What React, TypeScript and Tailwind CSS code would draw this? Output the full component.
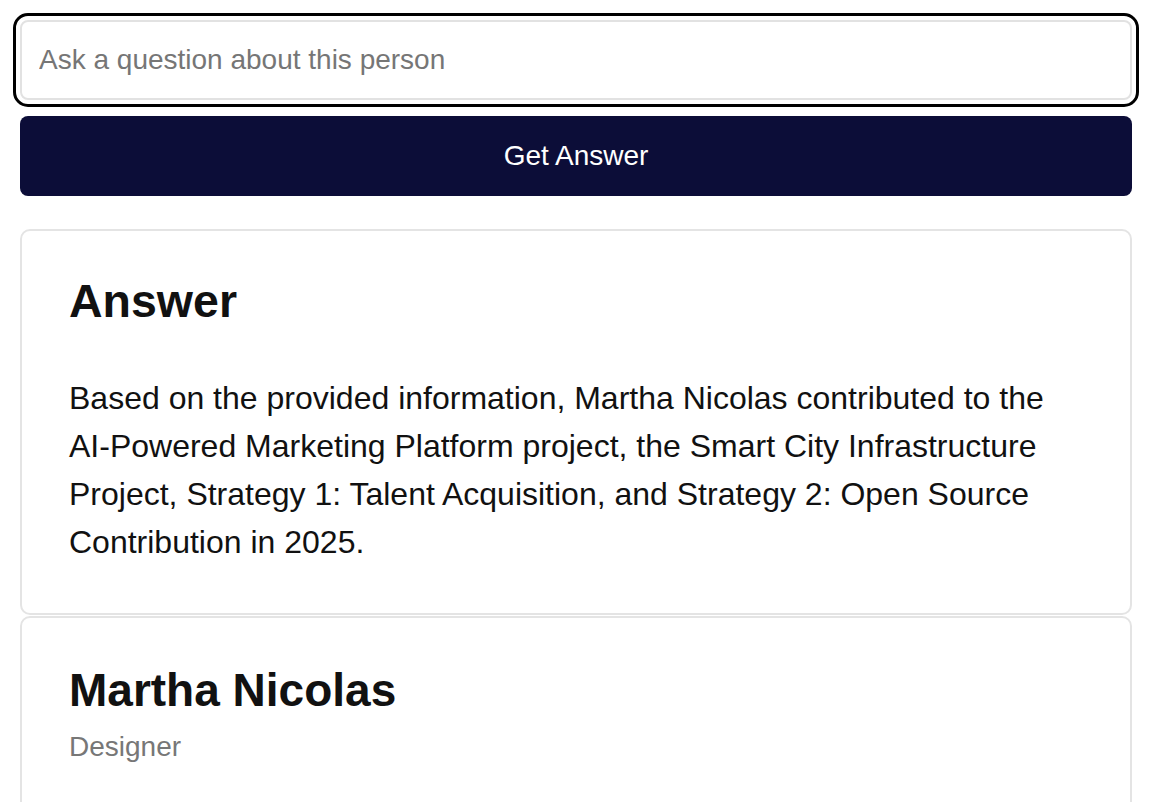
import { useState } from 'react';

const answerText =
  'Based on the provided information, Martha Nicolas contributed to the AI-Powered Marketing Platform project, the Smart City Infrastructure Project, Strategy 1: Talent Acquisition, and Strategy 2: Open Source Contribution in 2025.';

export default function App() {
  const [question, setQuestion] = useState('');

  return (
    <div className="min-h-screen bg-white pt-5 pr-6 pl-5 font-['Liberation_Sans',Arial,sans-serif] text-[#111]">
      {/* Question form */}
      <input
        value={question}
        onChange={(e) => setQuestion(e.target.value)}
        placeholder="Ask a question about this person"
        className="block h-[80px] w-full rounded-[8px] border-2 border-[#e2e2e2] bg-white px-[17px] text-[28px] text-[#111] outline-3 outline-solid outline-black outline-offset-4 placeholder:text-[#767676]"
      />
      <button className="mt-4 block h-[80px] w-full rounded-[8px] bg-[#0c0d38] text-[28px] text-white">
        Get Answer
      </button>

      {/* Answer card */}
      <div className="mt-[33px] rounded-[10px] border-2 border-[#e4e4e4] pt-[44px] pr-[47px] pb-[47px] pl-[47px]">
        <h2 className="text-[46.5px] leading-[52px] font-bold">Answer</h2>
        <p className="mt-[47px] text-[32px] leading-[48px]">{answerText}</p>
      </div>

      {/* Person card */}
      <div className="mt-[1px] rounded-[10px] border-2 border-[#e4e4e4] pt-[46px] pr-[47px] pb-[46px] pl-[47px]">
        <h2 className="text-[46px] leading-[52px] font-bold">Martha Nicolas</h2>
        <p className="mt-[11px] text-[28px] leading-[40px] text-[#777]">Designer</p>
        <div className="h-[200px]" />
      </div>
    </div>
  );
}
